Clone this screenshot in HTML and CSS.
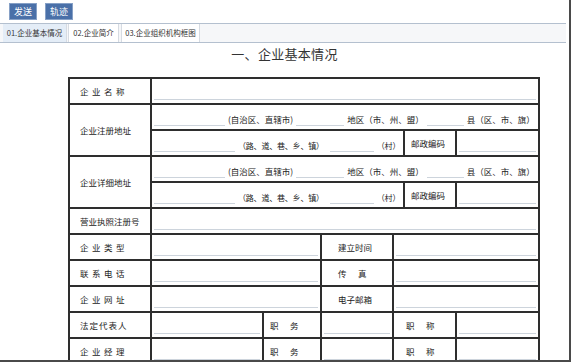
FILE: index.html
```html
<!DOCTYPE html>
<html lang="zh">
<head>
<meta charset="utf-8">
<link rel="stylesheet" href="styles.css">
</head>
<body>
<div class="frame">
  <div class="toolbar">
    <button class="btn">发送</button>
    <button class="btn">轨迹</button>
  </div>
  <div class="tabs">
    <div class="tab t1">01.企业基本情况</div>
    <div class="tab t2">02.企业简介</div>
    <div class="tab t3">03.企业组织机构框图</div>
  </div>
  <h1 class="title">一、企业基本情况</h1>
  <table class="form">
    <colgroup>
      <col class="c1"><col class="c2"><col class="c3"><col class="c4"><col class="c5"><col class="c6"><col class="c7">
    </colgroup>
    <tr>
      <td class="lbl sp">企业名称</td>
      <td colspan="6"><div class="inp"></div></td>
    </tr>
    <tr>
      <td class="lbl" rowspan="2">企业注册地址</td>
      <td colspan="6">
        <div class="addr">
          <span class="ln l1"></span><span class="tx">(自治区、直辖市)</span>
          <span class="ln l2"></span><span class="tx">地区（市、州、盟）</span>
          <span class="ln l3"></span><span class="tx">县（区、市、旗）</span>
        </div>
      </td>
    </tr>
    <tr>
      <td colspan="4">
        <div class="addr">
          <span class="ln l4"></span><span class="tx sm">（路、道、巷、乡、镇）</span>
          <span class="ln l5"></span><span class="tx sm">（村）</span>
        </div>
      </td>
      <td class="mid pc">邮政编码</td>
      <td><div class="inp"></div></td>
    </tr>
    <tr>
      <td class="lbl" rowspan="2">企业详细地址</td>
      <td colspan="6">
        <div class="addr">
          <span class="ln l1"></span><span class="tx">(自治区、直辖市)</span>
          <span class="ln l2"></span><span class="tx">地区（市、州、盟）</span>
          <span class="ln l3"></span><span class="tx">县（区、市、旗）</span>
        </div>
      </td>
    </tr>
    <tr>
      <td colspan="4">
        <div class="addr">
          <span class="ln l4"></span><span class="tx sm">（路、道、巷、乡、镇）</span>
          <span class="ln l5"></span><span class="tx sm">（村）</span>
        </div>
      </td>
      <td class="mid pc">邮政编码</td>
      <td><div class="inp"></div></td>
    </tr>
    <tr>
      <td class="lbl">营业执照注册号</td>
      <td colspan="6"><div class="inp"></div></td>
    </tr>
    <tr>
      <td class="lbl sp">企业类型</td>
      <td colspan="2"><div class="inp"></div></td>
      <td class="mid">建立时间</td>
      <td colspan="3"><div class="inp"></div></td>
    </tr>
    <tr>
      <td class="lbl sp">联系电话</td>
      <td colspan="2"><div class="inp"></div></td>
      <td class="mid wide">传真</td>
      <td colspan="3"><div class="inp"></div></td>
    </tr>
    <tr>
      <td class="lbl sp">企业网址</td>
      <td colspan="2"><div class="inp"></div></td>
      <td class="mid">电子邮箱</td>
      <td colspan="3"><div class="inp"></div></td>
    </tr>
    <tr>
      <td class="lbl sp2">法定代表人</td>
      <td><div class="inp"></div></td>
      <td class="mid wide jw">职务</td>
      <td><div class="inp"></div></td>
      <td class="mid wide jc" colspan="2">职称</td>
      <td><div class="inp"></div></td>
    </tr>
    <tr>
      <td class="lbl sp">企业经理</td>
      <td><div class="inp"></div></td>
      <td class="mid wide jw">职务</td>
      <td><div class="inp"></div></td>
      <td class="mid wide jc" colspan="2">职称</td>
      <td><div class="inp"></div></td>
    </tr>
    <tr>
      <td class="lbl">&nbsp;</td>
      <td colspan="6"><div class="inp"></div></td>
    </tr>
  </table>
</div>
</body>
</html>
```

FILE: styles.css
```css
* { box-sizing: border-box; }
html, body {
  margin: 0;
  padding: 0;
  background: #ffffff;
}
body {
  font-family: "Noto Sans CJK SC", "Liberation Sans", sans-serif;
  color: #222;
}
.frame {
  width: 571px;
  height: 362px;
  border-right: 2px solid #4a4a4a;
  border-bottom: 2px solid #4a4a4a;
  overflow: hidden;
  background: #fff;
}
.toolbar {
  display: flex;
  gap: 8px;
  padding: 3px 0 0 9px;
  height: 23px;
}
.btn {
  width: 28px;
  height: 17px;
  padding: 0;
  margin: 0;
  background: #4a70a8;
  border: 1px solid #86a0c6;
  color: #fff;
  font-family: "Noto Sans CJK SC", sans-serif;
  font-size: 9px;
  line-height: 15px;
}
.tabs {
  display: flex;
  width: 566px;
  height: 20px;
  border-top: 1px solid #b4c0cf;
  border-bottom: 1px solid #b4c0cf;
  background: #f6f7f9;
  padding-left: 3px;
}
.tab {
  font-size: 7.5px;
  line-height: 18px;
  padding: 0;
  text-align: center;
  white-space: nowrap;
  color: #333;
  background: #fff;
  border-left: 1px solid #d6dbe2;
  border-right: 1px solid #d6dbe2;
}
.t1 {
  width: 64px;
  background: #e4edf7;
  border-left: none;
}
.t2 { width: 51px; margin-left: 1px; }
.t3 { width: 79px; margin-left: 2px; }
.title {
  margin: 0;
  height: 34px;
  padding-top: 2px;
  text-align: center;
  font-size: 13px;
  font-weight: normal;
  letter-spacing: 0.3px;
  color: #333;
  line-height: 17px;
}
.form {
  margin-left: 68px;
  width: 470px;
  table-layout: fixed;
  border-collapse: collapse;
  font-size: 8.5px;
}
.c1 { width: 82px; }
.c2 { width: 112px; }
.c3 { width: 58px; }
.c4 { width: 72px; }
.c5 { width: 11px; }
.c6 { width: 52px; }
.c7 { width: 83px; }
.form td {
  border: 2px solid #2e2e2e;
  height: 26px;
  padding: 0 2px;
  vertical-align: middle;
  white-space: nowrap;
  overflow: hidden;
}
.form td.lbl {
  padding-left: 10px;
  color: #222;
}
.sp { letter-spacing: 3.5px; }
.sp2 { letter-spacing: 1px; }
.form td.mid {
  padding-left: 16px;
}
.wide { letter-spacing: 11.5px; }
.form td.jw { padding-left: 6px; }
.form td.jc { padding-left: 12px; }
.form td.pc { padding-left: 6px; }
.inp {
  height: 16px;
  margin-top: 2px;
  border-bottom: 1px solid #cdd4dc;
}
.addr {
  display: flex;
  align-items: flex-end;
  gap: 3px;
  height: 16px;
  margin-top: 2px;
}
.ln {
  display: block;
  height: 16px;
  border-bottom: 1px solid #cdd4dc;
  flex: none;
}
.tx {
  line-height: 13px;
  flex: none;
}
.tx.sm {
  font-size: 8px;
  letter-spacing: -0.2px;
}
.l1 { width: 71px; }
.l2 { width: 48px; }
.l3 { width: 37px; }
.l4 { width: 81px; }
.l5 { width: 44px; margin-left: 3px; }
```
